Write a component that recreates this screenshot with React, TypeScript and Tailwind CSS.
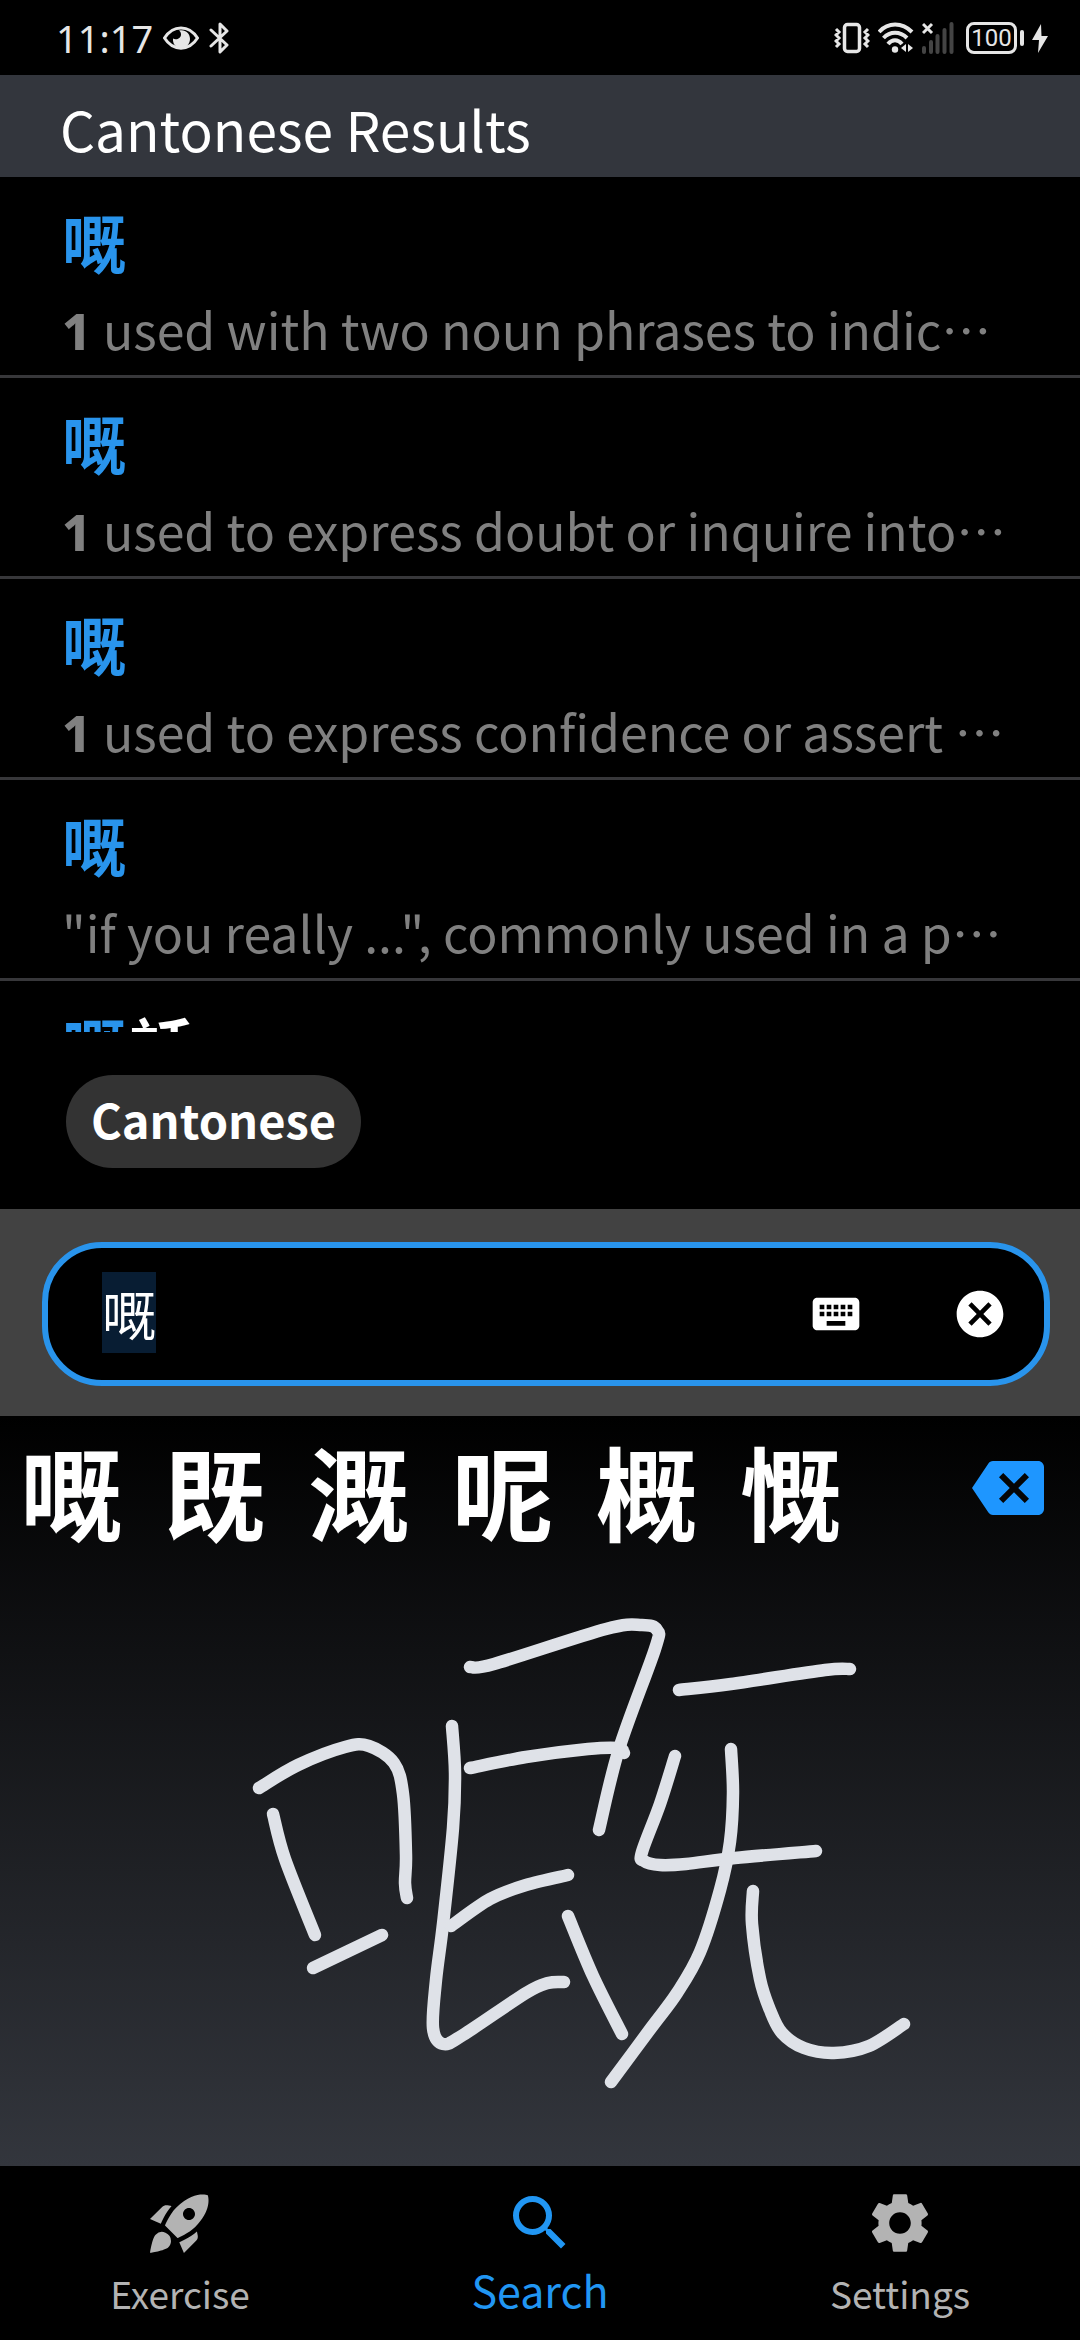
import { useEffect, useRef } from 'react';
import { MdBackspace, MdCancel, MdKeyboard, MdRocketLaunch, MdSearch, MdSettings } from 'react-icons/md';

type Point = [number, number];

type Result = { head: string; rest?: string; sense?: string; text?: string };

const results: Result[] = [
  { head: '嘅', sense: '1', text: 'used with two noun phrases to indic' },
  { head: '嘅', sense: '1', text: 'used to express doubt or inquire into' },
  { head: '嘅', sense: '1', text: 'used to express confidence or assert ' },
  { head: '嘅', text: '"if you really ...", commonly used in a p' },
  { head: '嘅', rest: '話' },
];

const candidates = ['嘅', '既', '溉', '呢', '概', '慨'];

const strokes: Point[][] = [
  [[259, 208], [298, 185], [345, 167], [369, 166], [394, 183], [403, 214], [406, 275], [405, 303], [407, 318]],
  [[273, 234], [285, 279], [315, 355]],
  [[313, 388], [382, 355]],
  [[452, 146], [455, 193], [453, 248], [443, 344], [436, 400], [433, 448], [443, 464], [463, 455], [526, 413], [548, 403], [564, 402]],
  [[470, 87], [494, 84], [606, 49], [642, 45], [657, 50], [655, 69], [619, 169], [599, 250]],
  [[470, 188], [526, 177], [588, 169], [618, 168], [624, 173]],
  [[451, 346], [490, 319], [526, 305], [568, 295]],
  [[568, 336], [593, 396], [622, 454]],
  [[679, 110], [731, 104], [825, 90], [850, 89]],
  [[675, 176], [660, 224], [642, 272], [644, 281], [660, 285], [686, 284], [735, 278], [816, 271]],
  [[731, 169], [733, 213], [730, 262], [720, 310], [700, 372], [677, 413], [651, 448], [611, 502]],
  [[753, 311], [752, 344], [760, 399], [770, 430], [782, 453], [804, 468], [834, 473], [869, 466], [904, 444]],
];

/** Catmull-Rom curve through the sampled pen positions. */
function curve(p: Point[]): string {
  let d = `M${p[0][0]} ${p[0][1]}`;
  for (let i = 0; i < p.length - 1; i++) {
    const a = p[i - 1] ?? p[i];
    const b = p[i];
    const c = p[i + 1];
    const e = p[i + 2] ?? c;
    d += `C${b[0] + (c[0] - a[0]) / 6} ${b[1] + (c[1] - a[1]) / 6} ${c[0] - (e[0] - b[0]) / 6} ${c[1] - (e[1] - b[1]) / 6} ${c[0]} ${c[1]}`;
  }
  return d;
}

function StatusBar() {
  return (
    <div className="flex h-[75px] shrink-0 items-center justify-between pl-14 pr-8 text-[#e6e6e6]">
      <div className="flex items-center gap-2.5">
        <span className="font-['Noto_Sans'] text-[38px] leading-none">11:17</span>
        <svg className="h-6 w-9" viewBox="0 0 36 24" fill="none" aria-hidden="true">
          <path d="M1.500 12C10-1.500 26-1.500 34.500 12C26 25.500 10 25.500 1.500 12Z" stroke="currentColor" strokeWidth="3" />
          <path d="M16 4.500C22 3 27 7 27 13c0 5-4 9-9 9s-8.500-4-8-9.500c3 2 8 0 8-4 0-2-.8-3.200-2-4Z" fill="currentColor" />
        </svg>
        <svg className="h-8 w-5" viewBox="0 0 20 32" fill="none" stroke="currentColor" strokeWidth="3" strokeLinejoin="round" strokeLinecap="round" aria-hidden="true">
          <path d="M2 8L18 23L11 30V2L18 9L2 24" />
        </svg>
      </div>
      <div className="flex items-center gap-2">
        <svg className="h-8 w-9" viewBox="0 0 36 32" fill="none" stroke="currentColor" aria-hidden="true">
          <rect x="10.500" y="2.500" width="15" height="27" rx="3" strokeWidth="3.500" />
          <path d="M2 7l3 3-3 3 3 3-3 3 3 3-3 3M34 7l-3 3 3 3-3 3 3 3-3 3 3 3" strokeWidth="3" />
        </svg>
        <svg className="h-8 w-9" viewBox="0 0 36 32" fill="none" stroke="currentColor" strokeWidth="4" aria-hidden="true">
          <path d="M1 10C10 0 24 0 34 10M5.500 16C12 9 22 9 29 16M10 22C14 17 20 17 24 22" />
          <circle cx="17" cy="27.500" r="3.200" fill="currentColor" stroke="none" />
          <path d="M28 22v8l-5-4zM30 22v8l5-4z" fill="currentColor" stroke="none" />
        </svg>
        <svg className="h-8 w-8" viewBox="0 0 32 32" fill="none" aria-hidden="true">
          <path d="M2 26v4M9 20v10M15.500 14v16M22.500 8v22M29.500 2v28" stroke="#444" strokeWidth="4" strokeLinecap="round" />
          <path d="M1 2l9 9M10 2l-9 9" stroke="currentColor" strokeWidth="3" />
        </svg>
        <div className="ml-1 flex items-center gap-[3px]">
          <div className="flex h-8 w-[51px] items-center justify-center rounded-lg border-3 border-current font-['Roboto'] text-2xl leading-none">
            100
          </div>
          <div className="h-4 w-1 rounded-full bg-current" />
        </div>
        <svg className="h-8 w-4" viewBox="0 0 16 32" fill="currentColor" aria-hidden="true">
          <path d="M9 2L0 18h7L6 31L16 14H9.500Z" />
        </svg>
      </div>
    </div>
  );
}

function ResultRow({ head, rest, sense, text }: Result) {
  return (
    <li className="flex h-[201px] shrink-0 flex-col border-b-3 border-[#37373a] px-[62px] pt-[15px]">
      <p className="text-[64px] font-bold leading-[96px] text-[#2994ec]">
        {head}
        {rest && <span className="ml-1 text-white">{rest}</span>}
      </p>
      {text && (
        <p className="mt-1 overflow-hidden whitespace-pre text-[50px] leading-[72px] text-[#808080]">
          {sense && <b className="mr-3 font-['Noto_Sans'] font-extrabold">{sense}</b>}
          {text}
          <span lang="zh-Hant" className="font-['Noto_Sans_CJK_TC']">…</span>
        </p>
      )}
    </li>
  );
}

function SearchField() {
  const input = useRef<HTMLInputElement>(null);
  useEffect(() => {
    input.current?.focus();
    input.current?.select();
  }, []);
  return (
    <div className="bg-[#424242] pb-[30px] pl-[42px] pr-[30px] pt-[33px]">
      <div className="flex h-36 items-center rounded-[60px] border-6 border-[#2994ec] bg-black pl-[54px] pr-9 text-white">
        <input
          ref={input}
          aria-label="Search"
          defaultValue="嘅"
          className="min-w-0 flex-1 bg-transparent pb-1 text-[54px] outline-none selection:bg-[#081d33] selection:text-white"
        />
        <button aria-label="Show keyboard" className="flex w-36 items-center justify-center">
          <MdKeyboard className="size-14" />
        </button>
        <button aria-label="Clear" className="ml-11 flex items-center justify-center">
          <MdCancel className="size-14" />
        </button>
      </div>
    </div>
  );
}

function Handwriting() {
  return (
    <section className="bg-linear-to-b/srgb from-black to-[#33363d]">
      <div className="flex h-[164px] items-start justify-between pl-5 pr-9 pt-4">
        <div className="flex gap-[42px] text-[102px] font-bold leading-[116px] text-white">
          {candidates.map((c) => (
            <button key={c}>{c}</button>
          ))}
        </div>
        <button aria-label="Undo stroke" className="mt-5 text-[#1e96ff]">
          <MdBackspace className="size-[72px]" />
        </button>
      </div>
      <svg className="block w-full" viewBox="0 0 1080 586" fill="none" stroke="#dfe2e8" strokeWidth="12.500" strokeLinecap="round" strokeLinejoin="round" role="img" aria-label="Handwritten character">
        {strokes.map((s, i) => (
          <path key={i} d={curve(s)} />
        ))}
      </svg>
    </section>
  );
}

function BottomNav() {
  return (
    <nav className="grid h-[174px] shrink-0 grid-cols-3 bg-black text-[#b3b3b3]">
      <a href="#exercise" className="flex flex-col items-center pt-[21px]">
        <MdRocketLaunch className="size-[72px]" />
        <span className="mt-2 text-[37px] leading-[52px]">Exercise</span>
      </a>
      <a href="#search" aria-current="page" className="flex flex-col items-center pt-[21px] text-[#2196f3]">
        <MdSearch className="size-[72px]" />
        <span className="mt-1 text-[43px] leading-[52px]">Search</span>
      </a>
      <a href="#settings" className="flex flex-col items-center pt-[21px]">
        <MdSettings className="size-[72px]" />
        <span className="mt-2 text-[37px] leading-[52px]">Settings</span>
      </a>
    </nav>
  );
}

export default function App() {
  return (
    <div className="flex h-screen flex-col overflow-hidden bg-black font-['Noto_Sans_CJK_SC',sans-serif]">
      <StatusBar />
      <h1 className="flex h-[102px] shrink-0 items-center bg-[#33363d] px-[60px] pt-1 text-[55px] leading-none text-white">
        Cantonese Results
      </h1>
      <ul className="flex min-h-0 flex-1 flex-col overflow-hidden">
        {results.map((r, i) => (
          <ResultRow key={i} {...r} />
        ))}
      </ul>
      <div className="shrink-0 px-[66px] pb-[41px] pt-[43px]">
        <button className="h-[93px] rounded-full bg-[#333] px-[25px] pb-1 text-[47px] font-bold text-white">Cantonese</button>
      </div>
      <SearchField />
      <Handwriting />
      <BottomNav />
    </div>
  );
}
